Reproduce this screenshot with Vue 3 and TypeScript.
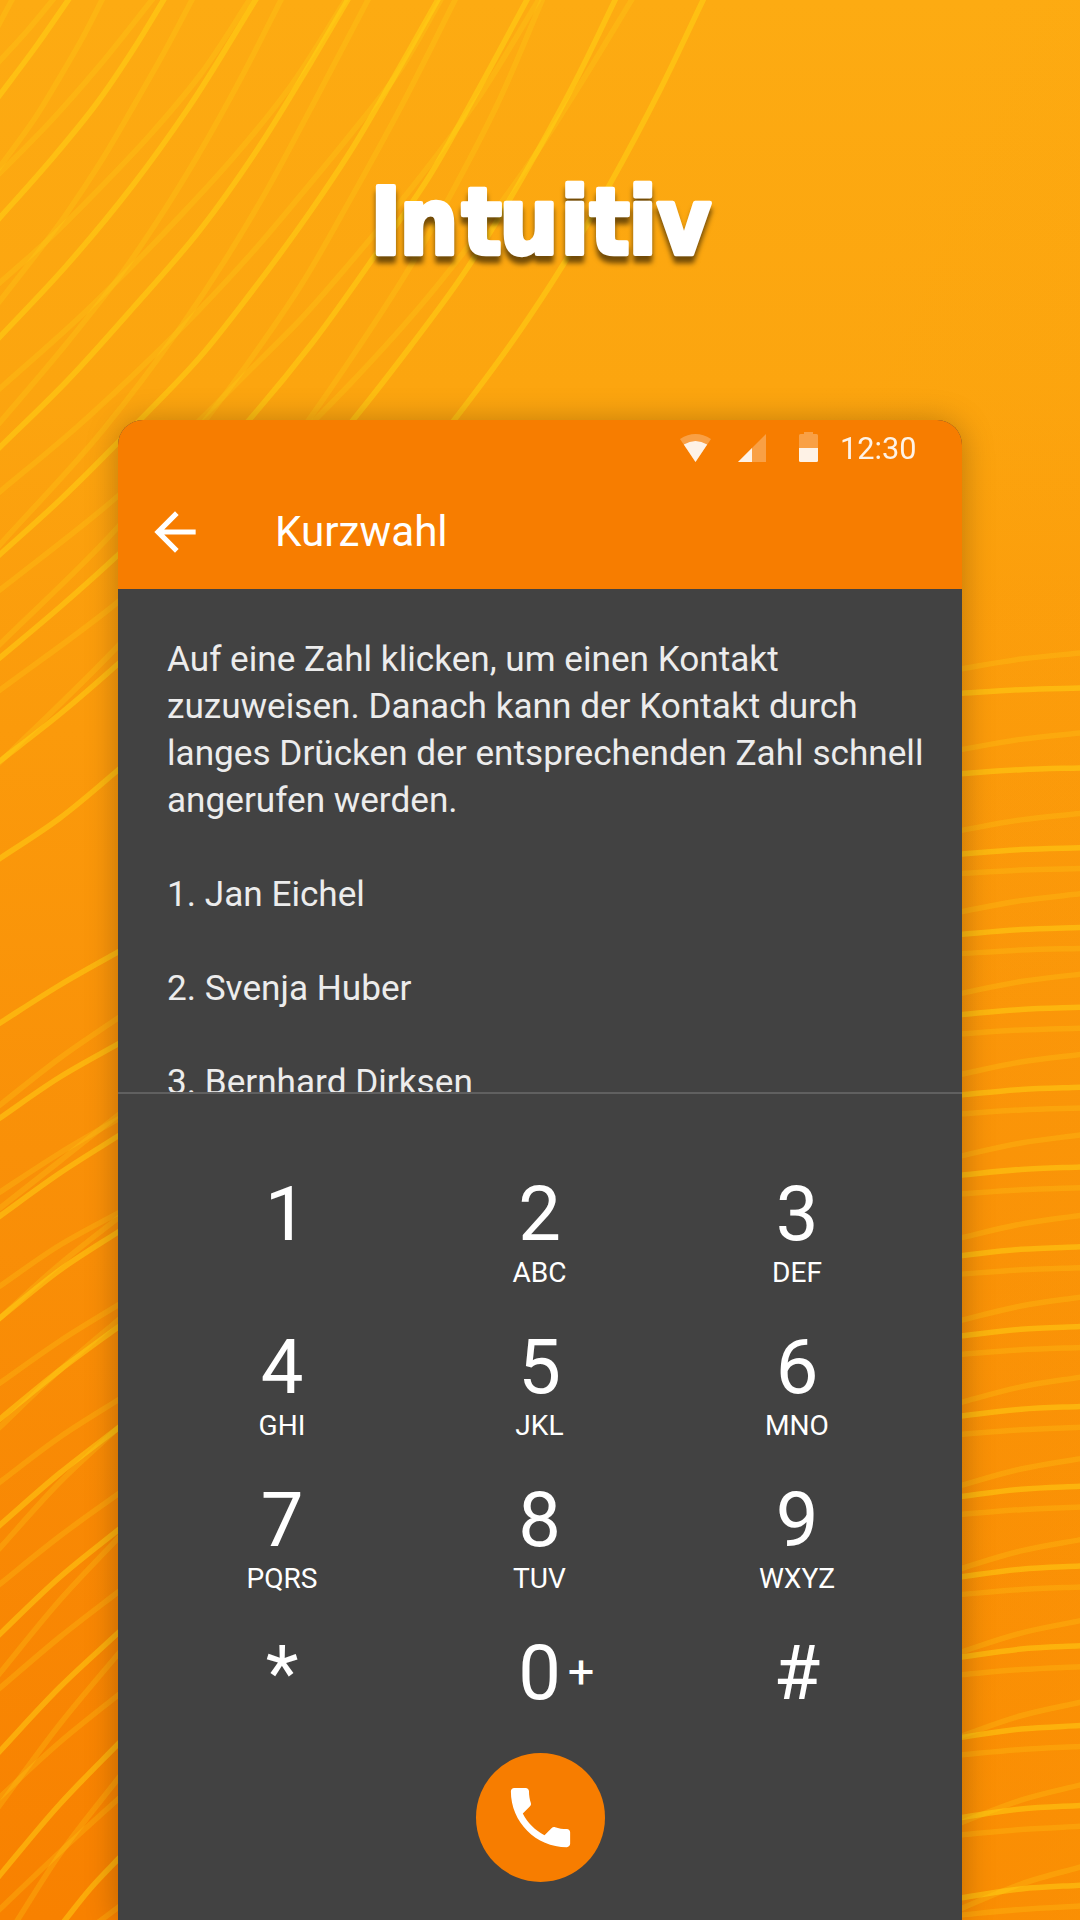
<script setup lang="ts">
type Pt = [number, number]

interface Key {
  digit: string
  letters?: string
  plus?: boolean
}

const keys: Key[] = [
  { digit: '1' },
  { digit: '2', letters: 'ABC' },
  { digit: '3', letters: 'DEF' },
  { digit: '4', letters: 'GHI' },
  { digit: '5', letters: 'JKL' },
  { digit: '6', letters: 'MNO' },
  { digit: '7', letters: 'PQRS' },
  { digit: '8', letters: 'TUV' },
  { digit: '9', letters: 'WXYZ' },
  { digit: '*' },
  { digit: '0', plus: true },
  { digit: '#' },
]

const contacts: string[] = ['Jan Eichel', 'Svenja Huber', 'Bernhard Dirksen']

// Smooth curve through a list of points, tangents weighted by chord length
function curve(p: Pt[]): string {
  const n = p.length
  const len = p.slice(1).map((q, i) => Math.hypot(q[0] - p[i][0], q[1] - p[i][1]))
  const tangent = (i: number): Pt => {
    const slope = (j: number): Pt => [(p[j + 1][0] - p[j][0]) / len[j], (p[j + 1][1] - p[j][1]) / len[j]]
    if (i === 0) return slope(0)
    if (i === n - 1) return slope(n - 2)
    const a = slope(i - 1)
    const b = slope(i)
    const w = len[i] / (len[i - 1] + len[i])
    return [a[0] * w + b[0] * (1 - w), a[1] * w + b[1] * (1 - w)]
  }
  let d = `M${p[0][0]} ${p[0][1]}`
  for (let i = 0; i < n - 1; i++) {
    const t0 = tangent(i)
    const t1 = tangent(i + 1)
    const h = len[i] / 3
    const q = p[i + 1]
    d += `C${p[i][0] + t0[0] * h} ${p[i][1] + t0[1] * h} ${q[0] - t1[0] * h} ${q[1] - t1[1] * h} ${q[0]} ${q[1]}`
  }
  return d
}

const topBright: Pt[][] = [
  [[71, -4], [37, 45], [-4, 100]],
  [[166, -4], [133, 50], [97, 103], [50, 161], [-4, 222]],
  [[258, -4], [187, 110], [133, 185], [67, 265], [-4, 341]],
  [[350, -4], [310, 64], [257, 150], [200, 230], [133, 308], [67, 381], [-4, 451]],
  [[440, -4], [393, 79], [350, 152], [310, 212], [250, 294], [200, 357], [140, 420], [60, 500], [-4, 558]],
  [[529, -4], [477, 92], [427, 180], [383, 244], [313, 342], [250, 419], [118, 555], [60, 607], [-4, 661]],
  [[617, -4], [577, 78], [537, 152], [460, 279], [410, 347], [353, 420], [250, 537], [118, 664], [60, 714], [-4, 764]],
  [[705, -4], [660, 90], [610, 184], [563, 265], [517, 335], [455, 419], [330, 570], [118, 770], [60, 818], [-4, 861]],
]

const topFaint: Pt[][] = [
  [[14, -4], [-4, 30]],
  [[104, -4], [83, 37], [60, 77], [37, 115], [-4, 172]],
  [[194, -4], [167, 47], [133, 107], [100, 163], [67, 213], [-4, 306]],
  [[283, -4], [240, 80], [197, 157], [160, 217], [127, 266], [67, 343], [-4, 427]],
  [[370, -4], [310, 110], [267, 190], [227, 257], [180, 328], [103, 430], [-4, 549]],
  [[457, -4], [403, 103], [350, 200], [303, 282], [253, 356], [207, 418], [118, 527], [-4, 648]],
  [[544, -4], [497, 105], [450, 196], [410, 267], [350, 360], [310, 418], [118, 646], [-4, 766]],
  [[56, -4], [27, 31], [-4, 65]],
  [[155, -4], [100, 65], [50, 122], [-4, 177]],
  [[252, -4], [200, 75], [150, 135], [100, 188], [50, 238], [-4, 286]],
  [[348, -4], [290, 87], [233, 158], [183, 213], [133, 265], [83, 314], [-4, 392]],
  [[443, -4], [400, 70], [350, 135], [300, 196], [250, 255], [200, 309], [150, 359], [77, 427], [-4, 495]],
  [[541, -4], [477, 100], [410, 190], [350, 263], [300, 320], [250, 370], [205, 415], [118, 496], [-4, 593]],
  [[634, -4], [583, 80], [545, 140], [483, 227], [417, 310], [350, 384], [315, 420], [220, 512], [118, 602], [-4, 693]],
]

const edge = (l: number, m: number, r: number): Pt[] => [
  [-4, l + (l - m) / 15],
  [60, m],
  [124, r + (r - m) / 10],
]

const leftBright: Pt[][] = [
  edge(1023, 985, 952),
  edge(1118, 1077, 1044),
  edge(1216, 1173, 1136),
  edge(1318, 1270, 1232),
  edge(1419, 1370, 1327),
  edge(1525, 1473, 1428),
  edge(1634, 1577, 1530),
  edge(1751, 1687, 1633),
  edge(1875, 1804, 1744),
  [[62, 1924], [90, 1889], [124, 1853]],
]

const leftFaint: Pt[][] = [
  edge(1105, 1058, 1018),
  edge(1192, 1153, 1119),
  edge(1286, 1245, 1213),
  edge(1383, 1341, 1305),
  edge(1482, 1437, 1400),
  edge(1584, 1536, 1494),
  edge(1688, 1637, 1592),
  edge(1797, 1742, 1695),
  edge(1909, 1852, 1799),
  [[96, 1924], [124, 1903]],
  edge(1208, 1161, 1115),
  edge(1318, 1264, 1218),
  edge(1427, 1370, 1320),
  edge(1548, 1482, 1428),
  edge(1673, 1600, 1538),
  edge(1805, 1724, 1654),
  [[15, 1924], [60, 1854], [124, 1771]],
]

const rightEdge = (l: number, r: number, sag: number): Pt[] => [
  [956, l + (l - r) / 15],
  [1021, (l + r) / 2 - sag],
  [1084, r],
]

const rightBright: Pt[][] = Array.from({ length: 16 }, (_, i) =>
  rightEdge(693.4 + 80.3 * i, 688 + 79.8 * i, 1 + i * 0.1),
)

const slopeLeft = [668.6, 749.4, 830.2, 911.5, 993, 1074, 1155.6, 1237.6, 1320, 1402, 1485, 1568, 1651.5, 1735.6, 1822, 1908]
const slopeRight = [652.6, 732.6, 813, 893.4, 973.7, 1054, 1134.5, 1215, 1296.6, 1376.6, 1458, 1539, 1620, 1701.5, 1784, 1866]

const rightFaint: Pt[][] = [
  ...slopeLeft.map((l, i) => rightEdge(l, slopeRight[i], 1.5 + i * 0.1)),
  ...Array.from({ length: 14 }, (_, i) => rightEdge(873.6 + 80.1 * i, 868.5 + 79.8 * i, 1)),
]

const bright: string[] = [...topBright, ...leftBright, ...rightBright].map(curve)
const faint: string[] = [...topFaint, ...leftFaint, ...rightFaint].map(curve)
</script>

<template>
  <main class="poster">
    <svg class="lines" viewBox="0 0 1080 1920" aria-hidden="true">
      <path v-for="(d, i) in faint" :key="'f' + i" :d="d" class="faint" />
      <path v-for="(d, i) in bright" :key="'b' + i" :d="d" class="bright" />
    </svg>

    <h1 class="headline">
      <svg class="headline-art" viewBox="0 0 1080 120">
        <text y="93.5" x="370.5 399.5 462 499.5 560.5 590 628.5 657">Intuitiv</text>
      </svg>
    </h1>

    <section class="phone">
      <header class="bar">
        <div class="status">
          <svg class="wifi" width="31" height="28" viewBox="0 0 31 28">
            <path d="M0 5Q15.500-5 31 5L15.500 28Z" opacity=".3" />
            <path d="M3.800 10.500Q15.500 3.500 27.200 10.500L15.500 28Z" />
          </svg>
          <svg class="signal" width="28" height="28" viewBox="0 0 28 28">
            <path d="M0 28L28 0V28Z" opacity=".3" />
            <path d="M0 28L14 14V28Z" />
          </svg>
          <svg class="battery" width="19" height="30" viewBox="0 0 19 30">
            <path d="M0 16V3.500Q0 2 1.500 2H5V0H14V2H17.500Q19 2 19 3.500V16Z" opacity=".3" />
            <path d="M0 16H19V28.500Q19 30 17.500 30H1.500Q0 30 0 28.500Z" />
          </svg>
          <span class="clock">12:30</span>
        </div>
        <div class="toolbar">
          <svg class="back" viewBox="0 0 24 24">
            <path d="M20 11H7.830l5.590-5.590L12 4l-8 8 8 8 1.410-1.410L7.830 13H20v-2z" />
          </svg>
          <span class="title">Kurzwahl</span>
        </div>
      </header>

      <div class="content">
        <p>
          Auf eine Zahl klicken, um einen Kontakt<br />
          zuzuweisen. Danach kann der Kontakt durch<br />
          langes Drücken der entsprechenden Zahl schnell<br />
          angerufen werden.
        </p>
        <p v-for="(name, i) in contacts" :key="name">{{ i + 1 }}. {{ name }}</p>
      </div>

      <div class="keypad">
        <div class="keys">
          <div v-for="k in keys" :key="k.digit" class="key">
            <div class="digit-row">
              <span class="digit" :class="{ one: k.digit === '1' }">{{ k.digit }}</span>
              <span v-if="k.plus" class="plus">+</span>
            </div>
            <span v-if="k.letters" class="letters">{{ k.letters }}</span>
          </div>
        </div>
        <div class="call">
          <svg viewBox="0 0 24 24">
            <path
              d="M6.620 10.790c1.440 2.830 3.760 5.140 6.590 6.590l2.200-2.200c.27-.27.67-.36 1.020-.24 1.120.37 2.330.57 3.570.57.55 0 1 .45 1 1V20c0 .55-.45 1-1 1-9.390 0-17-7.610-17-17 0-.55.45-1 1-1h3.500c.55 0 1 .45 1 1 0 1.250.2 2.450.57 3.570.11.35.03.74-.25 1.020l-2.200 2.200z"
            />
          </svg>
        </div>
      </div>
    </section>
  </main>
</template>

<style scoped>
.poster {
  position: relative;
  display: flex;
  flex-direction: column;
  align-items: center;
  width: 1080px;
  height: 1920px;
  overflow: hidden;
  font-family: Roboto, 'Liberation Sans', sans-serif;
  background:
    linear-gradient(115deg, rgba(255, 165, 8, 0) 50%, rgba(253, 160, 8, 0.45) 100%),
    linear-gradient(180deg, #fdab12 0%, #fca50f 20%, #fb9a0b 38%, #f99008 60%, #f88100 100%);
}

.lines {
  position: absolute;
  inset: 0;
  width: 1080px;
  height: 1920px;
}

.lines path {
  fill: none;
  stroke-width: 5.5;
}

.bright {
  stroke: rgba(255, 217, 22, 0.47);
}

.faint {
  stroke: rgba(255, 214, 24, 0.24);
}

.headline {
  position: relative;
  flex: none;
  margin: 0;
  padding-top: 160px;
  height: 260px;
  line-height: 0;
}

.headline-art {
  width: 1080px;
  height: 120px;
  font-family: 'DejaVu Sans Condensed', 'DejaVu Sans', sans-serif;
  font-size: 92px;
  font-weight: 700;
  font-stretch: condensed;
  fill: #fff;
  stroke: #fff;
  stroke-width: 4.5px;
  stroke-linejoin: round;
  filter: drop-shadow(0 7px 2.5px rgba(0, 0, 0, 0.55));
}

.phone {
  position: relative;
  flex: none;
  display: flex;
  flex-direction: column;
  width: 844px;
  height: 1500px;
  border-radius: 25px 25px 0 0;
  background: #424242;
  box-shadow: 0 2px 32px rgba(0, 0, 0, 0.26);
}

.bar {
  flex: none;
  height: 169px;
  border-radius: 25px 25px 0 0;
  background: #f77d00;
  color: #fff;
}

.status {
  display: flex;
  justify-content: flex-end;
  align-items: flex-end;
  height: 42px;
  padding-right: 46px;
}

.status svg {
  fill: #fff;
  opacity: 0.9;
}

.signal {
  margin-left: 27px;
}

.battery {
  margin-left: 33px;
}

.clock {
  width: 76px;
  margin: 0 0 -5px 22px;
  font-size: 30.7px;
  line-height: 36px;
  opacity: 0.9;
  white-space: nowrap;
}

.toolbar {
  display: flex;
  align-items: center;
  height: 62px;
  margin-top: 39px;
  padding-left: 26px;
}

.back {
  width: 62px;
  height: 62px;
  fill: #fff;
}

.title {
  margin-left: 69px;
  font-size: 42.2px;
  line-height: 50px;
}

.content {
  flex: none;
  box-sizing: border-box;
  height: 503px;
  overflow: hidden;
  padding: 47.4px 0 0 49px;
  font-size: 35.17px;
  line-height: 46.9px;
  color: #ececec;
  white-space: nowrap;
}

.content p {
  margin: 0 0 46.9px;
}

.keypad {
  flex: 1;
  display: flex;
  flex-direction: column;
  align-items: center;
  border-top: 2px solid #606060;
  color: #fff;
}

.keys {
  display: grid;
  grid-template-columns: repeat(3, 257.5px);
  grid-auto-rows: 114px;
  row-gap: 39px;
  margin: 82px 1px 0 0;
}

.key {
  display: flex;
  flex-direction: column;
  align-items: center;
  gap: 3px;
}

.digit-row {
  display: grid;
  grid-template-columns: 1fr auto 1fr;
  width: 100%;
  height: 76px;
}

.digit {
  grid-column: 2;
  font-size: 76px;
  line-height: 76px;
}

.one {
  padding-left: 8px;
}

.plus {
  grid-column: 3;
  padding-left: 7px;
  font-size: 47px;
  line-height: 74px;
}

.letters {
  font-size: 28.1px;
  line-height: 36px;
}

.call {
  display: flex;
  align-items: center;
  justify-content: center;
  width: 129px;
  height: 129px;
  margin-top: 4px;
  border-radius: 50%;
  background: #f77d00;
}

.call svg {
  width: 79px;
  height: 79px;
  fill: #fff;
}
</style>
